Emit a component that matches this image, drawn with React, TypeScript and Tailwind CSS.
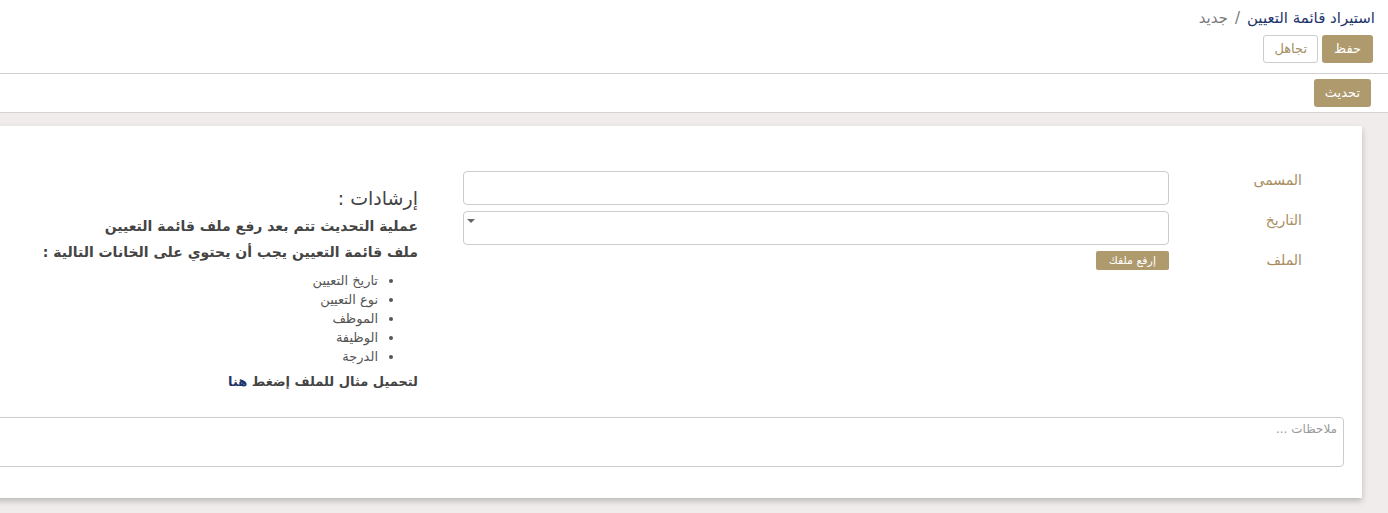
import React from 'react';

const fields = ['تاريخ التعيين', 'نوع التعيين', 'الموظف', 'الوظيفة', 'الدرجة'];

export default function App() {
  return (
    <div dir="rtl" className="min-h-[513px] overflow-hidden bg-[#f0ecec] text-[#333]" style={{ fontFamily: '"DejaVu Sans", sans-serif' }}>
      {/* control panel */}
      <div className="bg-white border-b border-[#cfcfcf] pr-[13px] pt-[8px] pb-[10px]">
        <div className="text-[15px] leading-[20px]">
          <span className="text-[#1d3569]">استيراد قائمة التعيين</span>
          <span className="text-[#777] mx-[7px]">/</span>
          <span className="text-[#777]">جديد</span>
        </div>
        <div className="mt-[7px] flex gap-[4px] pr-[2px]">
          <button className="h-[28px] px-[12px] rounded-[3px] bg-[#ae9a6d] text-white text-[13px]">حفظ</button>
          <button className="h-[28px] px-[10px] rounded-[3px] border border-[#ccc] bg-white text-[#a58e62] text-[13px]">تجاهل</button>
        </div>
      </div>
      <div className="bg-white border-b border-[#d6d2d2] pr-[17px] py-[5px]">
        <button className="h-[28px] px-[11px] rounded-[3px] bg-[#ae9a6d] text-white text-[13px]">تحديث</button>
      </div>

      {/* sheet */}
      <div className="mt-[13px] mr-[26px] ml-[-40px] bg-white shadow-[0_3px_6px_rgba(0,0,0,0.22)] pt-[45px] pb-[31px] pr-[60px]">
        <div className="flex">
          <div className="w-[133px] shrink-0 text-[14px] text-[#a88e60] leading-[20px]">
            <div className="h-[34px] -translate-y-[1px]">المسمى</div>
            <div className="h-[34px] mt-[6px] -translate-y-[1px]">التاريخ</div>
            <div className="h-[34px] mt-[6px] -translate-y-[1px]">الملف</div>
          </div>
          <div className="w-[706px] shrink-0">
            <div className="h-[34px] rounded-[4px] border border-[#ccc]" />
            <div className="relative mt-[6px] h-[34px] rounded-[4px] border border-[#ccc]">
              <div className="absolute left-[3px] top-[7px] w-0 h-0 border-l-[4px] border-r-[4px] border-t-[4px] border-l-transparent border-r-transparent border-t-[#666]" />
            </div>
            <div className="mt-[6px] flex">
              <button className="h-[19px] px-[13px] rounded-[2px] bg-[#ae9a6d] text-white text-[11px] leading-[19px]">إرفع ملفك</button>
            </div>
          </div>
          <div className="mr-[45px] pt-[14px] flex-1">
            <div className="text-[19px] leading-[26px] text-[#444]">إرشادات :</div>
            <div className="mt-[2px] text-[14px] leading-[27px] font-bold text-[#444]">عملية التحديث تتم بعد رفع ملف قائمة التعيين</div>
            <div className="text-[14px] leading-[25px] font-bold text-[#444]">ملف قائمة التعيين يجب أن يحتوي على الخانات التالية :</div>
            <ul className="mt-[6px] pr-[40px] list-disc text-[13px] leading-[19px] text-[#555]">
              {fields.map((f) => (
                <li key={f}>{f}</li>
              ))}
            </ul>
            <div className="mt-[6px] text-[13px] leading-[20px] font-bold text-[#444]">
              لتحميل مثال للملف إضغط <span className="text-[#1d3569]">هنا</span>
            </div>
          </div>
        </div>
        <div className="mt-[25px] mr-[-42px] h-[50px] rounded-[4px] border border-[#ccc] pr-[6px] pt-[2px] text-[12px] text-[#999]">
          ملاحظات ...
        </div>
      </div>
    </div>
  );
}
